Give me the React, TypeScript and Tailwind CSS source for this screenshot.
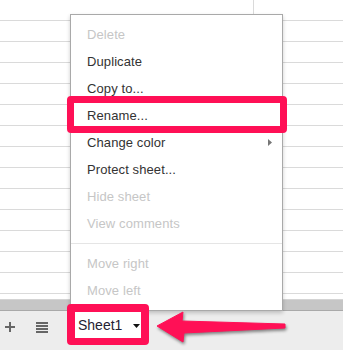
const items: { label: string; disabled?: boolean; sub?: boolean; sep?: boolean }[] = [
  { label: "Delete", disabled: true },
  { label: "Duplicate" },
  { label: "Copy to..." },
  { label: "Rename..." },
  { label: "Change color", sub: true },
  { label: "Protect sheet..." },
  { label: "Hide sheet", disabled: true },
  { label: "View comments", disabled: true },
  { label: "", sep: true },
  { label: "Move right", disabled: true },
  { label: "Move left", disabled: true },
];

function GridRows() {
  return (
    <div className="flex flex-col">
      {Array.from({ length: 14 }).map((_, i) => (
        <div key={i} className="flex h-[21px] border-b border-[#dadada]">
          <div className="w-[254px] border-r border-[#dadada]" />
        </div>
      ))}
      <div className="flex h-[5px]">
        <div className="w-[254px] border-r border-[#dadada]" />
      </div>
    </div>
  );
}

function SheetMenu() {
  return (
    <div className="absolute left-[70px] top-[14px] w-[213px] border border-[#a9a9a9] bg-white py-[6px] shadow-[0_2px_4px_rgba(0,0,0,0.2)]">
      {items.map((it, i) =>
        it.sep ? (
          <div key={i} className="my-[6px] h-px bg-[#e5e5e5]" />
        ) : (
          <div
            key={i}
            className={`flex h-[27px] items-center justify-between pl-[16px] pr-[10px] text-[13px] tracking-[0.1px] ${
              it.disabled ? "text-[#c6c6c6]" : "text-[#333]"
            }`}
          >
            <span>{it.label}</span>
            {it.sub && (
              <svg width="4" height="7" viewBox="0 0 4 7">
                <path d="M0 0 L4 3.5 L0 7 Z" fill="#777" />
              </svg>
            )}
          </div>
        )
      )}
    </div>
  );
}

export default function App() {
  return (
    <div
      className="relative h-[350px] w-[343px] overflow-hidden bg-white"
      style={{ fontFamily: '"Liberation Sans", Arial, sans-serif' }}
    >
      <div className="flex h-full flex-col">
        <GridRows />
        <div className="h-[11px] border-t border-[#d4d4d4] bg-[#c6c6c6]" />
        <div className="flex flex-1 items-start gap-[20px] border-t border-[#a9a9a9] bg-[#ededed] pl-[5px] pt-[11px]">
          <svg width="10" height="10" viewBox="0 0 10 10">
            <path d="M5 0 V10 M0 5 H10" stroke="#666" strokeWidth="2" />
          </svg>
          <svg width="12" height="11" viewBox="0 0 12 11" className="ml-px">
            <path d="M0 1 H12 M0 4 H12 M0 7 H12 M0 10 H12" stroke="#666" strokeWidth="2" />
          </svg>
        </div>
      </div>

      <SheetMenu />

      {/* highlight around Rename */}
      <div className="absolute left-[67px] top-[96px] h-[37px] w-[220px] rounded-[4px] border-[7px] border-[#ff1056]" />

      {/* Sheet1 tab with highlight */}
      <div className="absolute left-[67px] top-[304px] flex h-[41px] w-[82px] items-center rounded-[4px] border-[8px] border-b-[7px] border-[#ff1056] bg-white pl-[3px]">
        <span className="text-[14px] text-[#1f2233]">Sheet1</span>
        <svg width="7" height="4" viewBox="0 0 7 4" className="ml-[11px] mt-px">
          <path d="M0 0 H7 L3.5 4 Z" fill="#111" />
        </svg>
      </div>

      {/* arrow */}
      <svg
        className="absolute left-0 top-0"
        width="343"
        height="350"
        viewBox="0 0 343 350"
        style={{ filter: "drop-shadow(1px 2px 1.5px rgba(0,0,0,0.45))" }}
      >
        <path
          d="M157 326 L183 312 L182 321 L285 324 L285 328 L184 333 L183 342 Z"
          fill="#ff1056"
          strokeLinejoin="round"
          stroke="#ff1056"
          strokeWidth="1"
        />
      </svg>
    </div>
  );
}
